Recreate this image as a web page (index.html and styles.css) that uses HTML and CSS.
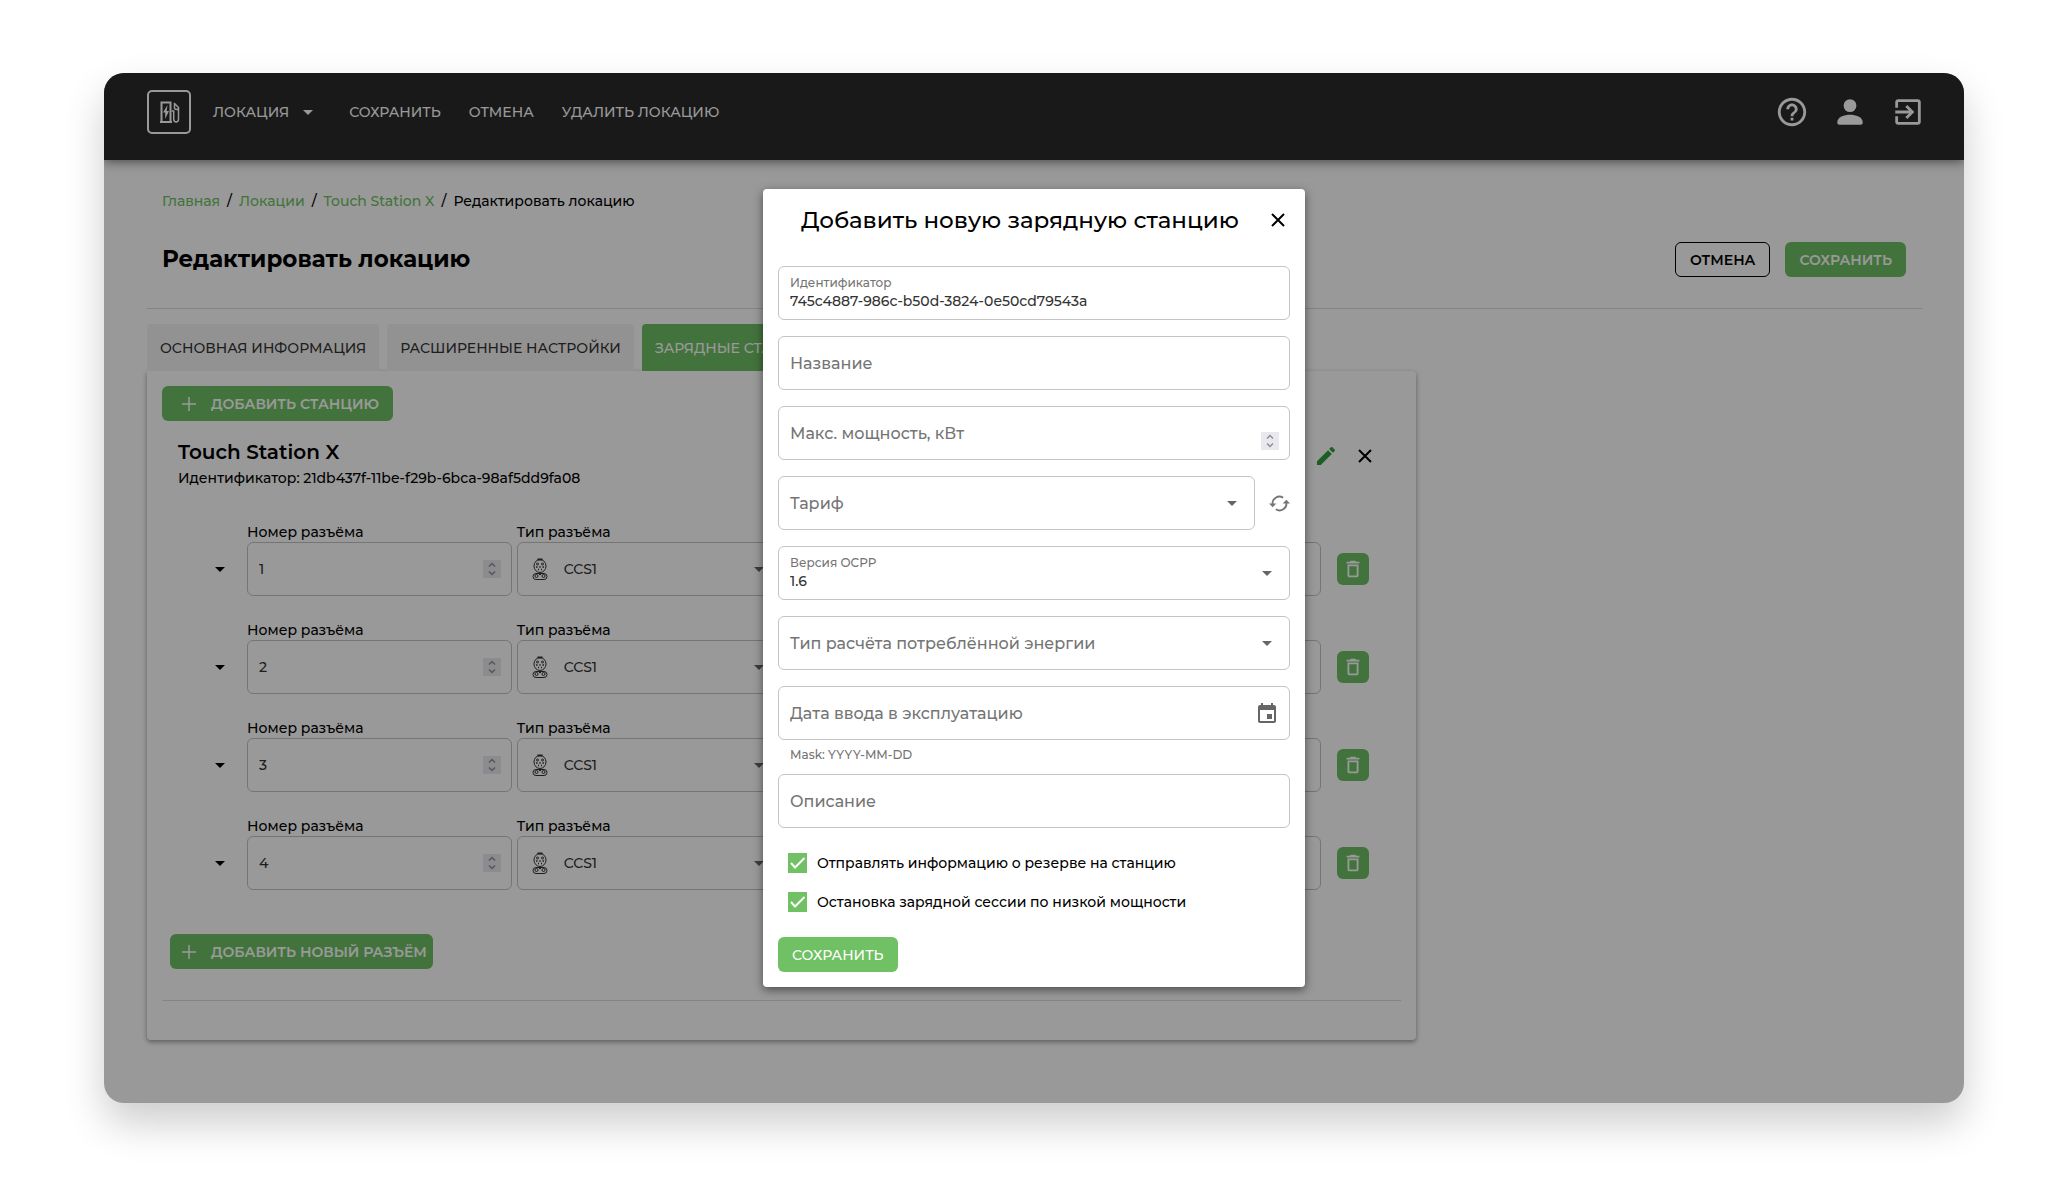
FILE: index.html
```html
<!DOCTYPE html>
<html lang="ru">
<head>
    <meta charset="UTF-8">
    <meta name="viewport" content="width=device-width, initial-scale=1.0">
    <title>Редактировать локацию</title>
    <link rel="stylesheet" href="styles.css">
</head>
<body>
    <!-- Shared icons -->
    <svg class="sprite" aria-hidden="true">
        <symbol id="caret" viewBox="0 0 10 5"><path d="M0 0h10L5 5z"/></symbol>
        <symbol id="close" viewBox="0 0 14 14"><path d="M1 1l12 12M13 1L1 13" fill="none" stroke="currentColor" stroke-width="2"/></symbol>
        <symbol id="plus" viewBox="0 0 14 14"><path d="M7 0v14M0 7h14" fill="none" stroke="currentColor" stroke-width="1.5"/></symbol>
        <symbol id="spin" viewBox="0 0 18 18">
            <path d="M0 0h18v18H0z" fill="#e9e9ed"/>
            <path d="M6 6.500l3-3 3 3M6 11.500l3 3 3-3" fill="none" stroke="#8f8f9d" stroke-width="1.5"/>
        </symbol>
        <symbol id="trash" viewBox="0 0 24 24"><path d="M6 19c0 1.100.9 2 2 2h8c1.100 0 2-.9 2-2V7H6v12zM8 9h8v10H8V9zm7.500-5l-1-1h-5l-1 1H5v2h14V4z"/></symbol>
        <symbol id="ccs" viewBox="0 0 16 22">
            <g fill="none" stroke="currentColor">
                <path d="M5.500 1.500h5" stroke-width="2"/>
                <ellipse cx="8" cy="8" rx="6" ry="6.500"/>
                <circle cx="5.500" cy="6" r="1"/><circle cx="10.500" cy="6" r="1"/>
                <path d="M4 9h1.500M10.500 9H12M7.300 9h1.400M6 11.500h1M9 11.500h1" stroke-width="1.5"/>
                <rect x="1" y="15.500" width="14" height="6" rx="3"/>
                <circle cx="4.500" cy="18" r="1.500"/><circle cx="11.500" cy="18" r="1.500"/>
                <path d="M7 16.500h2"/>
            </g>
        </symbol>
    </svg>

    <div class="window">
        <header class="topbar">
            <a class="logo" href="#" aria-label="Зарядные станции">
                <svg class="line" width="24" height="24" viewBox="0 0 24 24">
                    <path d="M4.500 21.500v-19h9v19M3 22h12" stroke-width="2"/>
                    <path d="M10.500 5L6 12.500h2.200V19L12 11H9.700z" fill="currentColor" stroke="none"/>
                    <path d="M14.500 11h2.200v8q0 3 2.400 3t2.400-3V7.500L17 3M17.500 4v4.500q2 2 4 0" stroke-width="1.5"/>
                </svg>
            </a>
            <nav class="menu">
                <button type="button">ЛОКАЦИЯ <svg class="caret"><use href="#caret"/></svg></button>
                <button type="button">СОХРАНИТЬ</button>
                <button type="button">ОТМЕНА</button>
                <button type="button">УДАЛИТЬ ЛОКАЦИЮ</button>
            </nav>
            <div class="actions">
                <a href="#" aria-label="Помощь"><svg viewBox="0 0 24 24"><path d="M11 18h2v-2h-2v2zm1-16C6.480 2 2 6.480 2 12s4.480 10 10 10 10-4.480 10-10S17.520 2 12 2zm0 18c-4.410 0-8-3.590-8-8s3.590-8 8-8 8 3.590 8 8-3.590 8-8 8zm0-14c-2.210 0-4 1.790-4 4h2c0-1.100.9-2 2-2s2 .9 2 2c0 2-3 1.750-3 5h2c0-2.250 3-2.500 3-5 0-2.210-1.790-4-4-4z"/></svg></a>
                <a href="#" aria-label="Профиль"><svg viewBox="0 0 24 24"><circle cx="12" cy="7.500" r="4.500"/><path d="M3 19.500c0-4 5-5.500 9-5.500s9 1.500 9 5.500q0 1.500-1.500 1.500h-15Q3 21 3 19.500z"/></svg></a>
                <a href="#" aria-label="Выход"><svg viewBox="0 0 24 24"><path d="M10.090 15.590L11.500 17l5-5-5-5-1.410 1.410L12.670 11H3v2h9.670l-2.580 2.590zM19 3H5c-1.110 0-2 .9-2 2v4h2V5h14v14H5v-4H3v4c0 1.100.89 2 2 2h14c1.100 0 2-.9 2-2V5c0-1.100-.9-2-2-2z"/></svg></a>
            </div>
        </header>

        <main class="page">
            <nav class="breadcrumbs">
                <a href="#">Главная</a><span>/</span><a href="#">Локации</a><span>/</span><a href="#">Touch Station X</a><span>/</span><b>Редактировать локацию</b>
            </nav>
            <div class="page-head">
                <h1>Редактировать локацию</h1>
                <div class="page-buttons">
                    <button type="button" class="btn btn-outline">ОТМЕНА</button>
                    <button type="button" class="btn">СОХРАНИТЬ</button>
                </div>
            </div>

            <div class="tabs">
                <button type="button">ОСНОВНАЯ ИНФОРМАЦИЯ</button>
                <button type="button">РАСШИРЕННЫЕ НАСТРОЙКИ</button>
                <button type="button" class="active">ЗАРЯДНЫЕ СТАНЦИИ</button>
            </div>

            <section class="panel">
                <button type="button" class="btn btn-add"><svg><use href="#plus"/></svg>ДОБАВИТЬ СТАНЦИЮ</button>
                <div class="station-head">
                    <div>
                        <h2>Touch Station X</h2>
                        <p>Идентификатор: 21db437f-11be-f29b-6bca-98af5dd9fa08</p>
                    </div>
                    <div class="station-actions">
                        <button type="button" class="icon-btn edit" aria-label="Изменить"><svg viewBox="3 3 18 18"><path d="M3 17.250V21h3.750L17.810 9.940l-3.750-3.750L3 17.250zM20.710 7.040c.39-.39.39-1.020 0-1.410l-2.340-2.340c-.39-.39-1.020-.39-1.410 0l-1.830 1.830 3.750 3.750 1.830-1.830z"/></svg></button>
                        <button type="button" class="icon-btn" aria-label="Удалить"><svg><use href="#close"/></svg></button>
                    </div>
                </div>

                <div class="connectors" id="connectors"></div>

                <button type="button" class="btn btn-add btn-connector"><svg><use href="#plus"/></svg>ДОБАВИТЬ НОВЫЙ РАЗЪЁМ</button>
                <hr>
            </section>
        </main>

        <div class="backdrop">
            <form class="modal" role="dialog" aria-labelledby="modalTitle">
                <div class="modal-head">
                    <h2 id="modalTitle">Добавить новую зарядную станцию</h2>
                    <button type="button" class="icon-btn" aria-label="Закрыть"><svg><use href="#close"/></svg></button>
                </div>

                <div class="field filled">
                    <input type="text" id="stationId" value="745c4887-986c-b50d-3824-0e50cd79543a">
                    <label for="stationId">Идентификатор</label>
                </div>
                <div class="field">
                    <input type="text" id="stationName">
                    <label for="stationName">Название</label>
                </div>
                <div class="field">
                    <input type="number" id="power">
                    <label for="power">Макс. мощность, кВт</label>
                    <svg class="spin low"><use href="#spin"/></svg>
                </div>
                <div class="field-row">
                    <div class="field">
                        <select id="tariff"><option value=""></option></select>
                        <label for="tariff">Тариф</label>
                        <svg class="caret"><use href="#caret"/></svg>
                    </div>
                    <button type="button" class="refresh" aria-label="Обновить">
                        <svg class="line" viewBox="0 0 20 16">
                            <path d="M3.500 9A6.500 6.500 0 0 1 13.500 2.500M16.500 7A6.500 6.500 0 0 1 6.500 13.500" stroke-width="1.7"/>
                            <path d="M0 8h7l-3.500 3.500zM13 8h7l-3.500-3.500z" fill="currentColor" stroke="none"/>
                        </svg>
                    </button>
                </div>
                <div class="field filled">
                    <select id="ocpp"><option>1.6</option></select>
                    <label for="ocpp">Версия OCPP</label>
                    <svg class="caret"><use href="#caret"/></svg>
                </div>
                <div class="field">
                    <select id="energy"><option value=""></option></select>
                    <label for="energy">Тип расчёта потреблённой энергии</label>
                    <svg class="caret"><use href="#caret"/></svg>
                </div>
                <div class="field">
                    <input type="text" id="startDate">
                    <label for="startDate">Дата ввода в эксплуатацию</label>
                    <svg class="calendar" viewBox="3 1 18 21"><path d="M17 12h-5v5h5v-5zM16 1v2H8V1H6v2H5c-1.110 0-1.990.9-1.990 2L3 19c0 1.100.89 2 2 2h14c1.100 0 2-.9 2-2V5c0-1.100-.9-2-2-2h-1V1h-2zm3 18H5V8h14v11z"/></svg>
                </div>
                <p class="hint">Mask: YYYY-MM-DD</p>
                <div class="field">
                    <input type="text" id="description">
                    <label for="description">Описание</label>
                </div>

                <div class="checks">
                    <label><input type="checkbox" checked>Отправлять информацию о резерве на станцию</label>
                    <label><input type="checkbox" checked>Остановка зарядной сессии по низкой мощности</label>
                </div>
                <button type="submit" class="btn btn-save">СОХРАНИТЬ</button>
            </form>
        </div>
    </div>

    <script>
        const connectors = document.getElementById('connectors');
        for (let n = 1; n <= 4; n++) {
            connectors.insertAdjacentHTML('beforeend', `
                <div class="connector">
                    <button type="button" class="expand" aria-label="Развернуть"><svg class="caret"><use href="#caret"/></svg></button>
                    <div class="column">
                        <label for="number${n}">Номер разъёма</label>
                        <div class="field">
                            <input type="number" id="number${n}" value="${n}">
                            <svg class="spin"><use href="#spin"/></svg>
                        </div>
                    </div>
                    <div class="column">
                        <label for="type${n}">Тип разъёма</label>
                        <div class="field with-icon">
                            <select id="type${n}"><option>CCS1</option></select>
                            <svg class="ccs"><use href="#ccs"/></svg>
                            <svg class="caret"><use href="#caret"/></svg>
                        </div>
                    </div>
                    <div class="column"><div class="field"><input type="text" aria-label="Мощность"></div></div>
                    <div class="column"><div class="field"><input type="text" aria-label="Ток"></div></div>
                    <button type="button" class="btn btn-trash" aria-label="Удалить разъём"><svg><use href="#trash"/></svg></button>
                </div>`);
        }

        document.querySelector('.modal').addEventListener('submit', function(event) {
            event.preventDefault();
        });
    </script>
</body>
</html>
```
FILE: styles.css
```css
* {
    box-sizing: border-box;
}
body {
    margin: 0;
    padding: 73px 103px 72px 104px;
    background-color: #fff;
    color: #000;
    font-family: Montserrat, Inter, "Noto Sans", sans-serif;
    font-size: 14px;
    font-weight: 500;
}
button, input, select {
    font: inherit;
    color: inherit;
}
button {
    padding: 0;
    border: none;
    background: none;
    cursor: pointer;
}
svg {
    display: block;
    fill: currentColor;
}
.line {
    fill: none;
    stroke: currentColor;
}
h1, h2, p {
    margin: 0;
}
.sprite {
    display: none;
}
.window {
    position: relative;
    border-radius: 20px;
    overflow: hidden;
    background-color: #fff;
    box-shadow: 0 20px 40px rgba(0, 0, 0, 0.2);
}

/* Header */
.topbar {
    display: flex;
    align-items: center;
    height: 87px;
    padding: 0 39px 9px 43px;
    background-color: #2a2a2a;
    color: #fff;
    box-shadow: 0 2px 10px rgba(0, 0, 0, 0.5);
}
.logo {
    display: flex;
    align-items: center;
    justify-content: center;
    width: 44px;
    height: 44px;
    border: 2px solid #fff;
    border-radius: 5px;
    color: #fff;
}
.menu {
    display: flex;
    gap: 28px;
    margin-left: 22px;
}
.menu button {
    display: flex;
    align-items: center;
    gap: 14px;
}
.menu button:first-child {
    padding-right: 8px;
}
.caret {
    width: 10px;
    height: 5px;
}
.actions {
    display: flex;
    gap: 24px;
    margin-left: auto;
}
.actions a {
    color: #fff;
}
.actions svg {
    width: 34px;
    height: 34px;
}

/* Page */
.page {
    padding: 31px 42px 63px 43px;
}
.breadcrumbs {
    display: flex;
    gap: 7px;
    padding-left: 15px;
    line-height: 20px;
}
.breadcrumbs a {
    color: #70c064;
    text-decoration: none;
}
.breadcrumbs b {
    font-weight: 500;
}
.page-head {
    display: flex;
    align-items: center;
    justify-content: space-between;
    padding: 31px 16px 31px 15px;
    border-bottom: 1px solid #dcdcdc;
}
.page-head h1 {
    font-size: 23px;
    line-height: 35px;
    font-weight: 700;
}
.page-buttons {
    display: flex;
    gap: 15px;
}
.btn {
    height: 35px;
    padding: 0 14px;
    border-radius: 6px;
    background-color: #70c064;
    color: #fff;
    font-weight: 600;
}
.btn-outline {
    border: 1px solid #000;
    background: none;
    color: #000;
}
.tabs {
    display: flex;
    gap: 8px;
    margin-top: 15px;
}
.tabs button {
    height: 47px;
    padding: 0 13px;
    border-radius: 4px 4px 0 0;
    background-color: #f3f3f3;
    color: #333;
}
.tabs .active {
    background-color: #70c064;
    color: #fff;
}
.panel {
    max-width: 1269px;
    padding: 15px;
    border-radius: 0 4px 4px 4px;
    background-color: #fff;
    box-shadow: 0 2px 5px rgba(0, 0, 0, 0.4);
}
.panel hr {
    margin: 31px 0 24px;
    border: none;
    border-top: 1px solid #dcdcdc;
}
.btn-add {
    display: flex;
    align-items: center;
    gap: 15px;
    padding: 0 14px 0 20px;
}
.btn-add svg {
    width: 14px;
    height: 14px;
}
.btn-connector {
    margin: 44px 8px 0;
    padding: 0 6px 0 12px;
}
.station-head {
    display: flex;
    justify-content: space-between;
    padding: 19px 29px 0 16px;
}
.station-head h2 {
    font-size: 20px;
    line-height: 25px;
    font-weight: 600;
}
.station-head p {
    line-height: 26px;
}
.station-actions {
    display: flex;
    align-items: center;
    gap: 23px;
    height: 32px;
}
.icon-btn svg {
    width: 14px;
    height: 14px;
}
.edit {
    color: #2e9e3a;
}
.edit svg {
    width: 18px;
    height: 18px;
}

/* Connector rows */
.connectors {
    display: grid;
    gap: 24px;
    padding: 31px 32px 0 48px;
}
.connector {
    display: flex;
    align-items: flex-end;
    gap: 5px;
}
.connector .column {
    flex: 1;
}
.connector .column > label {
    display: block;
    line-height: 20px;
}
.expand {
    height: 54px;
    padding: 0 17px 0 5px;
}
.btn-trash {
    width: 32px;
    height: 32px;
    margin: 0 0 11px 11px;
    padding: 5px;
}
.btn-trash svg {
    width: 22px;
    height: 22px;
}

/* Fields: control, label and icon share one grid cell */
.field {
    display: grid;
    flex: 1;
    align-items: center;
}
.field > * {
    grid-area: 1 / 1;
}
.field input,
.field select {
    width: 100%;
    height: 54px;
    padding: 0 11px;
    border: 1px solid #c4c4c4;
    border-radius: 6px;
    background: none;
    color: #333;
    appearance: none;
    outline: none;
}
.field input[type="number"] {
    appearance: textfield;
}
.field label {
    padding-left: 12px;
    color: #757575;
    font-size: 16px;
    pointer-events: none;
}
.field svg {
    justify-self: end;
    margin-right: 18px;
    color: #666;
    pointer-events: none;
}
.field .spin {
    width: 18px;
    height: 18px;
    margin-right: 11px;
}
.field .low {
    margin-top: 16px;
}
.field .calendar {
    width: 18px;
    height: 21px;
    margin-right: 14px;
}
.with-icon select {
    padding-left: 46px;
}
.field .ccs {
    justify-self: start;
    width: 16px;
    height: 22px;
    margin-left: 15px;
    color: #333;
}
.filled input,
.filled select {
    padding-top: 16px;
}
.filled label {
    align-self: start;
    padding-top: 9px;
    font-size: 12px;
    line-height: 16px;
}

/* Modal */
.backdrop {
    position: absolute;
    inset: 0;
    display: flex;
    align-items: center;
    justify-content: center;
    background-color: rgba(0, 0, 0, 0.4);
}
.modal {
    display: grid;
    gap: 16px;
    width: 542px;
    padding: 15px;
    border-radius: 4px;
    background-color: #fff;
    box-shadow: 0 3px 10px rgba(0, 0, 0, 0.5);
}
.modal-head {
    display: flex;
    align-items: center;
    justify-content: space-between;
    padding: 0 5px 14px 23px;
}
.modal-head h2 {
    font-size: 23px;
    line-height: 32px;
    font-weight: 500;
}
.field-row {
    display: flex;
    gap: 14px;
}
.refresh {
    color: #757575;
}
.refresh svg {
    width: 21px;
    height: 17px;
}
.hint {
    margin: -10px 0 -6px;
    padding-left: 12px;
    color: #757575;
    font-size: 12px;
    line-height: 18px;
}
.checks {
    display: grid;
    gap: 19px;
    padding: 9px 10px;
}
.checks label {
    display: flex;
    align-items: center;
    gap: 10px;
    height: 20px;
}
.checks input {
    width: 19px;
    height: 20px;
    margin: 0;
    appearance: none;
    background: #70c064 url("data:image/svg+xml,%3Csvg xmlns='http://www.w3.org/2000/svg' viewBox='0 0 19 20'%3E%3Cpath d='M3 10l4 4.500L16.500 5' fill='none' stroke='white' stroke-width='2'/%3E%3C/svg%3E") center no-repeat;
}
.btn-save {
    justify-self: start;
    font-weight: 500;
}
```
